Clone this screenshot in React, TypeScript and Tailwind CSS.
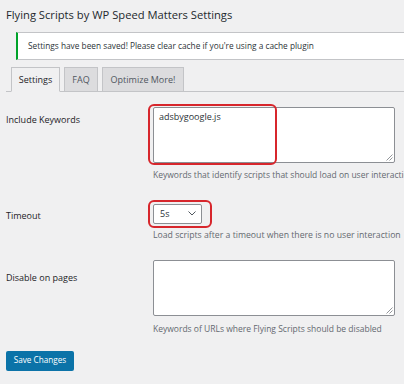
import React from 'react';

const font = { fontFamily: '"Open Sans", "Noto Sans", sans-serif' };

export default function App() {
  return (
    <div className="w-[404px] h-[384px] overflow-hidden bg-[#f0f0f1] text-[#1d2327]" style={font}>
      <div className="pl-[6px]">
        {/* Title */}
        <h1 className="pt-[7px] text-[11.2px] leading-[16px] text-[#23282d]">
          Flying Scripts by WP Speed Matters Settings
        </h1>

        {/* Notice */}
        <div className="mt-[9px] ml-[10px] h-[28px] flex items-center bg-white border border-[#c3c4c7] border-l-[2px] border-l-[#00a32a] border-r-0 pl-[10px] text-[8.3px] text-[#2c3338]">
          Settings have been saved! Please clear cache if you're using a cache plugin
        </div>

        {/* Tabs */}
        <div className="mt-[7px] flex items-end gap-[4px] pl-[5px] border-b border-[#c3c4c7] h-[25px]">
          <div className="h-[25px] -mb-px w-[49px] flex items-center justify-center border border-[#c3c4c7] border-b-[#f0f0f1] bg-[#f0f0f1] text-[9px] text-[#1d2327]">
            Settings
          </div>
          <div className="h-[24px] w-[34px] flex items-center justify-center border border-b-0 border-[#c3c4c7] bg-[#dcdcde] text-[9px] text-[#50575e]">
            FAQ
          </div>
          <div className="h-[24px] w-[82px] flex items-center justify-center border border-b-0 border-[#c3c4c7] bg-[#dcdcde] text-[9px] text-[#50575e]">
            Optimize More!
          </div>
        </div>

        {/* Form */}
        <div className="mt-[15px] grid grid-cols-[147px_242px] text-[9px]">
          {/* Include Keywords */}
          <div className="pt-[6px]">Include Keywords</div>
          <div>
            <div className="relative">
              <div className="h-[56px] bg-white border border-[#8c8f94] rounded-[2px] px-[5px] pt-[2px] text-[#2c3338]">
                adsbygoogle.js
              </div>
              <ResizeGrip />
              <div className="absolute left-[-5px] top-[-3px] w-[129px] h-[61px] border-2 border-[#d7262c] rounded-[6px]" />
            </div>
            <p className="mt-[6px] text-[8.5px] text-[#646970] whitespace-nowrap">
              Keywords that identify scripts that should load on user interaction
            </p>
          </div>

          {/* Timeout */}
          <div className="pt-[27px]">Timeout</div>
          <div className="pt-[22px]">
            <div className="relative w-[49px]">
              <div className="h-[20px] bg-white border border-[#8c8f94] rounded-[2px] flex items-center justify-between pl-[6px] pr-[5px] text-[#2c3338]">
                <span>5s</span>
                <svg width="8" height="5" viewBox="0 0 8 5" fill="none">
                  <path d="M0.5 0.5 L4 4 L7.5 0.5" stroke="#50575e" strokeWidth="1" />
                </svg>
              </div>
              <div className="absolute left-[-5px] top-[-4px] w-[64px] h-[28px] border-2 border-[#d7262c] rounded-[6px]" />
            </div>
            <p className="mt-[5px] text-[8.7px] text-[#646970] whitespace-nowrap">
              Load scripts after a timeout when there is no user interaction
            </p>
          </div>

          {/* Disable on pages */}
          <div className="pt-[29px]">Disable on pages</div>
          <div className="pt-[18px]">
            <div className="relative">
              <div className="h-[56px] bg-white border border-[#8c8f94] rounded-[2px]" />
              <ResizeGrip />
            </div>
            <p className="mt-[7px] text-[8.5px] text-[#646970] whitespace-nowrap">
              Keywords of URLs where Flying Scripts should be disabled
            </p>
          </div>
        </div>

        {/* Button */}
        <button className="mt-[15px] h-[20px] w-[68px] rounded-[2px] bg-[#0b73a8] text-white text-[8.2px]">
          Save Changes
        </button>
      </div>
    </div>
  );
}

function ResizeGrip() {
  return (
    <svg className="absolute right-[2px] bottom-[2px]" width="7" height="7" viewBox="0 0 7 7">
      <path d="M6.5 0.5 L0.5 6.5 M6.5 3.5 L3.5 6.5" stroke="#787c82" strokeWidth="0.8" />
    </svg>
  );
}
